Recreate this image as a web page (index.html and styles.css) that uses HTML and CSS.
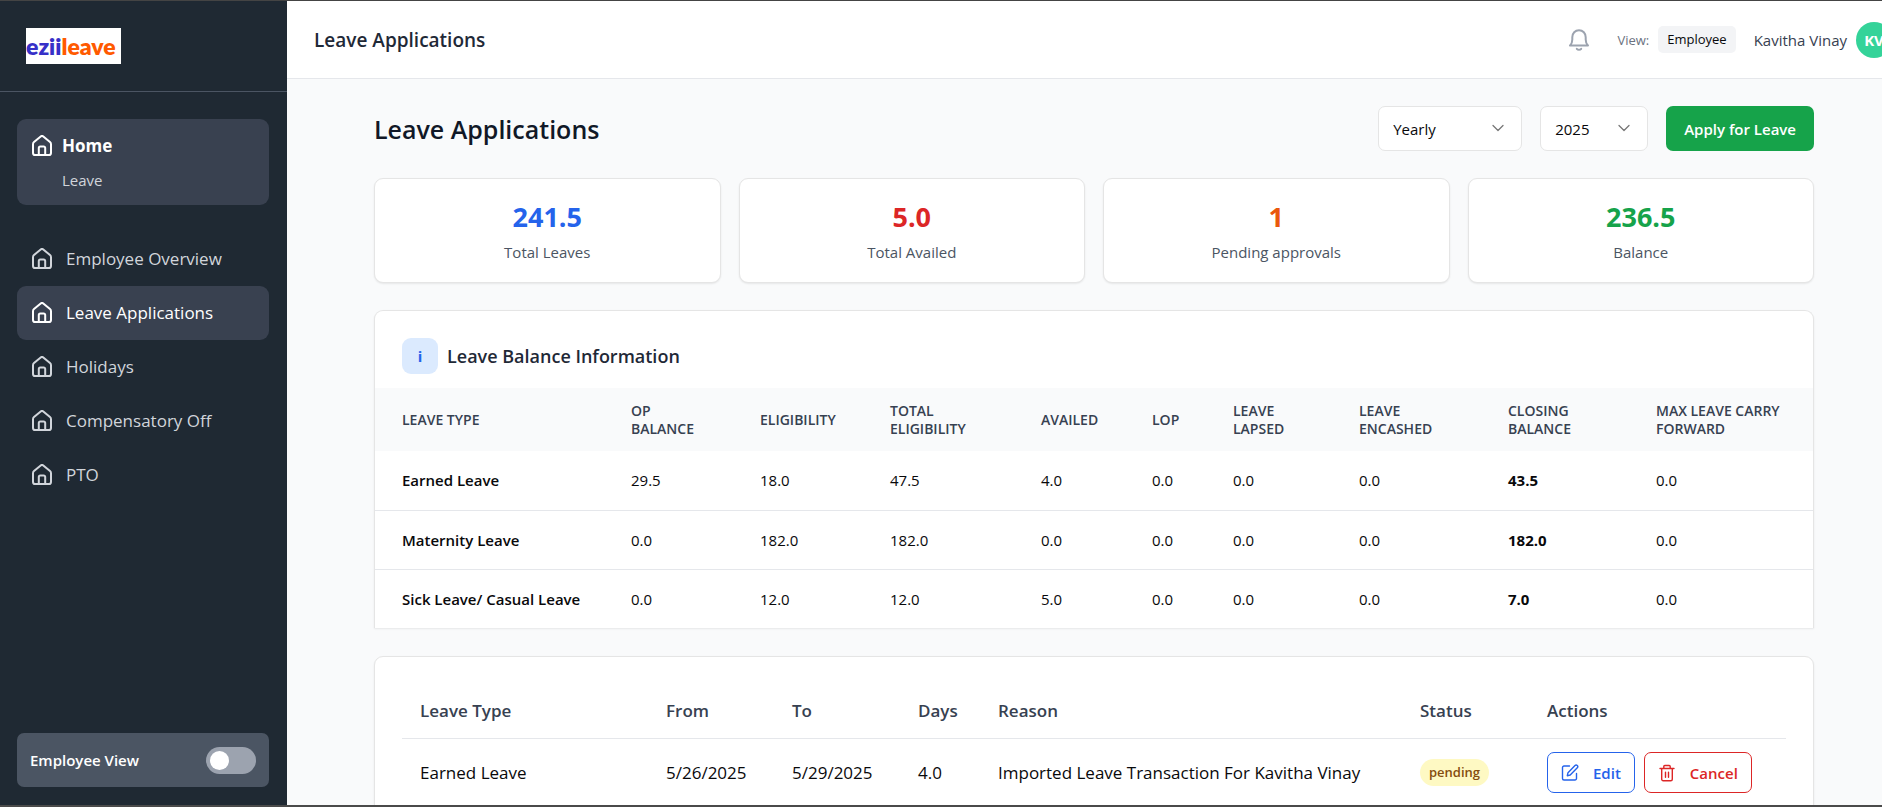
FILE: index.html
```html
<!DOCTYPE html>
<html lang="en">
<head>
<meta charset="utf-8">
<title>Leave Applications</title>
<link rel="stylesheet" href="styles.css">
</head>
<body>
<svg width="0" height="0" class="sprite" aria-hidden="true">
  <symbol id="home" viewBox="0 0 20 21"><path d="M1 9.200c0-.9.300-1.500 1-2.100L8.700 1.500a2 2 0 0 1 2.600 0L18 7.100c.7.600 1 1.200 1 2.100v8.700a2.100 2.100 0 0 1-2.100 2.100H3.100A2.100 2.100 0 0 1 1 17.900Z"/><path d="M6.800 19.800V13a1.500 1.500 0 0 1 1.500-1.500h3.400a1.500 1.500 0 0 1 1.500 1.500v6.800"/></symbol>
  <symbol id="chevron" viewBox="0 0 12 8"><path d="m1 1.500 5 5 5-5"/></symbol>
</svg>
<div class="app">
  <aside class="sidebar">
    <div class="brand"><a href="#" class="logo"><span class="logo-a">ezii</span><span class="logo-b">leave</span></a></div>
    <nav class="nav">
      <a href="#" class="home-card">
        <svg class="icon"><use href="#home"/></svg>
        <span class="home-title">Home</span>
        <span class="home-sub">Leave</span>
      </a>
      <ul class="menu">
        <li><a href="#" class="menu-link"><svg class="icon"><use href="#home"/></svg>Employee Overview</a></li>
        <li><a href="#" class="menu-link active"><svg class="icon"><use href="#home"/></svg>Leave Applications</a></li>
        <li><a href="#" class="menu-link"><svg class="icon"><use href="#home"/></svg>Holidays</a></li>
        <li><a href="#" class="menu-link"><svg class="icon"><use href="#home"/></svg>Compensatory Off</a></li>
        <li><a href="#" class="menu-link"><svg class="icon"><use href="#home"/></svg>PTO</a></li>
      </ul>
      <label class="view-switch">Employee View<input type="checkbox" class="toggle"></label>
    </nav>
  </aside>
  <div class="page">
    <header class="topbar">
      <div class="topbar-title">Leave Applications</div>
      <div class="topbar-tools">
        <button class="bell" aria-label="Notifications"><svg viewBox="0 0 20 22"><path d="M1 16.500h18c-1.800-1.600-2.300-3.500-2.300-6V8.200C16.700 4.200 13.900 1.200 10 1.200S3.300 4.200 3.300 8.200v2.300c0 2.500-.5 4.400-2.300 6Z"/><path d="M7.800 19.800c1 1.200 3.400 1.200 4.400 0"/></svg></button>
        <span class="view-label">View:</span>
        <span class="view-chip">Employee</span>
        <span class="user-name">Kavitha Vinay</span>
        <span class="avatar">KV</span>
      </div>
    </header>
    <main class="main">
      <div class="container">
        <div class="heading">
          <h1>Leave Applications</h1>
          <div class="filters">
            <div class="select select-period"><select aria-label="Period"><option>Yearly</option></select><svg><use href="#chevron"/></svg></div>
            <div class="select select-year"><select aria-label="Year"><option>2025</option></select><svg><use href="#chevron"/></svg></div>
            <button class="apply">Apply for Leave</button>
          </div>
        </div>
        <section class="stats">
          <div class="card stat"><div class="stat-value blue">241.5</div><div class="stat-label">Total Leaves</div></div>
          <div class="card stat"><div class="stat-value red">5.0</div><div class="stat-label">Total Availed</div></div>
          <div class="card stat"><div class="stat-value orange">1</div><div class="stat-label">Pending approvals</div></div>
          <div class="card stat"><div class="stat-value green">236.5</div><div class="stat-label">Balance</div></div>
        </section>
        <section class="card balance">
          <div class="balance-head"><span class="info">i</span><h2>Leave Balance Information</h2></div>
          <table class="balance-table">
            <thead><tr>
              <th class="b-type">Leave Type</th><th class="b-op">OP<br>Balance</th><th class="b-elig">Eligibility</th><th class="b-total">Total<br>Eligibility</th><th class="b-availed">Availed</th><th class="b-lop">LOP</th><th class="b-lapsed">Leave<br>Lapsed</th><th class="b-encashed">Leave<br>Encashed</th><th class="b-closing">Closing<br>Balance</th><th class="b-carry">Max Leave Carry<br>Forward</th>
            </tr></thead>
            <tbody>
              <tr><th scope="row">Earned Leave</th><td>29.5</td><td>18.0</td><td>47.5</td><td>4.0</td><td>0.0</td><td>0.0</td><td>0.0</td><td class="closing">43.5</td><td>0.0</td></tr>
              <tr><th scope="row">Maternity Leave</th><td>0.0</td><td>182.0</td><td>182.0</td><td>0.0</td><td>0.0</td><td>0.0</td><td>0.0</td><td class="closing">182.0</td><td>0.0</td></tr>
              <tr><th scope="row">Sick Leave/ Casual Leave</th><td>0.0</td><td>12.0</td><td>12.0</td><td>5.0</td><td>0.0</td><td>0.0</td><td>0.0</td><td class="closing">7.0</td><td>0.0</td></tr>
            </tbody>
          </table>
        </section>
        <section class="card requests">
          <table class="request-table">
            <thead><tr><th class="r-type">Leave Type</th><th class="r-date">From</th><th class="r-date">To</th><th class="r-days">Days</th><th class="r-reason">Reason</th><th class="r-status">Status</th><th class="r-actions">Actions</th></tr></thead>
            <tbody><tr>
              <td>Earned Leave</td><td>5/26/2025</td><td>5/29/2025</td><td>4.0</td><td>Imported Leave Transaction For Kavitha Vinay</td>
              <td><span class="pill">pending</span></td>
              <td><div class="actions">
                <button class="action edit"><svg viewBox="0 0 18 18"><path d="M8.500 2H3a1.500 1.500 0 0 0-1.500 1.500v11A1.500 1.500 0 0 0 3 16h11a1.500 1.500 0 0 0 1.500-1.500V9.500"/><path d="M6.300 11.700 7 8.700 14 1.600a1.500 1.500 0 0 1 2.300 2.200L9.200 11Z"/></svg>Edit</button>
                <button class="action cancel"><svg viewBox="0 0 18 18"><path d="M2 4.500h14M5.800 4.300V2.500a1 1 0 0 1 1-1h4.400a1 1 0 0 1 1 1v1.800M3.700 4.500V15.300a1.500 1.500 0 0 0 1.500 1.500h7.600a1.500 1.500 0 0 0 1.500-1.500V4.500M7.500 8.300v5M10.500 8.300v5"/></svg>Cancel</button>
              </div></td>
            </tr></tbody>
          </table>
        </section>
      </div>
    </main>
  </div>
</div>
</body>
</html>
```
FILE: styles.css
```css
* { box-sizing: border-box; }
body { margin: 0; overflow: hidden; font-family: "Open Sans", "Noto Sans", sans-serif; font-size: 17px; color: #09090b; }
a { color: inherit; text-decoration: none; }
button, select { font: inherit; cursor: pointer; }
h1, h2, ul { margin: 0; padding: 0; font-weight: 600; }
svg { fill: none; stroke: currentColor; stroke-width: 2; stroke-linecap: round; stroke-linejoin: round; flex: none; }
.sprite { position: absolute; }

.app { display: flex; width: calc(100% + 19px); height: 100vh; border-top: 1px solid #444; border-bottom: 2px solid #4a4a4a; overflow: hidden; }

.sidebar { display: flex; flex-direction: column; flex: none; width: 287px; background: #1f2933; color: #d1d5db; }
.brand { padding: 27px 26px; border-bottom: 1px solid #4b5563; }
.logo { display: flex; align-items: center; width: 95px; height: 36px; background: #fff; font: 800 23px/36px Lato, sans-serif; overflow: hidden; }
.logo-a { color: #3730c8; }
.logo-b { color: #ff5a00; }
.nav { display: flex; flex-direction: column; flex: 1; padding: 27px 18px 18px 17px; }
.home-card { display: grid; grid-template-columns: 20px 1fr; column-gap: 10px; align-items: center; padding: 13px 15px; border-radius: 9px; background: #394150; margin-bottom: 27px; }
.icon { width: 20px; height: 21px; }
.home-card .icon, .home-title { color: #fff; }
.home-title { font-weight: 700; line-height: 27px; }
.home-sub { grid-column: 2; font-size: 15px; line-height: 24px; margin-top: 9px; }
.menu { list-style: none; font-weight: 400; }
.menu-link { display: flex; align-items: center; gap: 14px; height: 54px; padding: 0 15px 2px; border-radius: 9px; }
.active { background: #394150; color: #fff; }
.view-switch { display: flex; align-items: center; justify-content: space-between; height: 54px; margin-top: auto; padding: 0 13px; border-radius: 7px; background: #4b5563; color: #fff; font-size: 15px; font-weight: 600; }
.toggle { appearance: none; width: 50px; height: 27px; margin: 0; padding: 4px; border-radius: 14px; background: #9ca3af; }
.toggle::before { content: ""; display: block; width: 19px; height: 19px; border-radius: 50%; background: #fff; }
.toggle:checked::before { margin-left: auto; }

.page { display: flex; flex-direction: column; flex: 1; min-width: 0; background: #f9fafb; }
.topbar { display: flex; align-items: center; justify-content: space-between; flex: none; height: 78px; padding: 0 9px 0 27px; border-bottom: 1px solid #e5e7eb; background: #fff; }
.topbar-title { font-size: 19px; font-weight: 600; color: #1f2937; }
.topbar-tools { display: flex; align-items: center; font-size: 15px; }
.bell { display: flex; padding: 0; margin-right: 28px; border: 0; background: none; color: #9ca3af; }
.bell svg { width: 20px; height: 22px; }
.view-label { font-size: 13px; color: #6b7280; margin-right: 9px; }
.view-chip { padding: 0 9px; border-radius: 5px; background: #f3f4f6; font-size: 13px; line-height: 27px; margin-right: 18px; }
.user-name { color: #374151; margin-right: 9px; }
.avatar { width: 36px; height: 36px; border-radius: 50%; background: #34d399; color: #fff; font-weight: 700; line-height: 36px; text-align: center; }

.main { flex: 1; min-height: 0; padding: 27px; overflow: hidden; }
.container { max-width: 1440px; margin: 0 auto; }
.heading { display: flex; align-items: center; justify-content: space-between; height: 45px; }
h1 { font-size: 25px; color: #111827; }
.filters { display: flex; gap: 18px; font-size: 15px; }
.select { position: relative; height: 45px; }
.select-period { width: 144px; }
.select-year { width: 108px; }
.select select { appearance: none; width: 100%; height: 100%; padding: 0 14px; border: 1px solid #e5e5e5; border-radius: 7px; background: #fff; color: inherit; }
.select svg { position: absolute; right: 18px; top: 18px; width: 12px; height: 8px; stroke-width: 1.3; color: #777; pointer-events: none; }
.apply { padding: 0 18px; border: 0; border-radius: 7px; background: #16a34a; color: #fff; font-weight: 600; }

.card { background: #fff; border: 1px solid #e5e5e5; border-radius: 9px; box-shadow: 0 1px 2px rgba(0, 0, 0, .08); }
.stats { display: grid; grid-template-columns: repeat(4, 1fr); gap: 18px; margin: 27px 0; }
.stat { padding: 18px; text-align: center; }
.stat-value { font-size: 27px; font-weight: 700; line-height: 39px; }
.stat-label { font-size: 15px; line-height: 23px; margin-top: 5px; color: #4b5563; }
.blue { color: #2563eb; }
.red { color: #dc2626; }
.orange { color: #ea580c; }
.green { color: #16a34a; }

.balance { border-bottom: 0; border-radius: 9px 9px 0 0; margin-bottom: 28px; }
.balance-head { display: flex; align-items: center; gap: 9px; padding: 27px 27px 14px; }
.info { width: 36px; height: 36px; border-radius: 9px; background: #dbeafe; color: #2563eb; font-size: 15px; font-weight: 700; line-height: 36px; text-align: center; }
h2 { font-size: 18px; line-height: 36px; color: #1f2937; }
table { width: 100%; border-collapse: collapse; table-layout: fixed; text-align: left; }
.balance-table th, .balance-table td { padding: 0 0 0 27px; font-size: 15px; white-space: nowrap; }
.balance-table thead th { height: 63px; background: #f9fafb; color: #374151; font-size: 14px; font-weight: 600; line-height: 18px; text-transform: uppercase; }
.balance-table tbody tr { height: 59px; }
.balance-table tbody tr + tr { border-top: 1px solid #e5e7eb; }
.balance-table tbody th { font-weight: 600; }
.balance-table .closing { font-weight: 700; }
.b-type { width: 229px; }
.b-op { width: 129px; }
.b-elig { width: 130px; }
.b-total { width: 151px; }
.b-availed { width: 111px; }
.b-lop { width: 81px; }
.b-lapsed { width: 126px; }
.b-encashed { width: 149px; }
.b-closing { width: 148px; }
.b-carry { width: 184px; }

.requests { padding: 27px; }
.request-table th, .request-table td { padding: 0 0 0 18px; white-space: nowrap; }
.request-table th { height: 54px; font-weight: 600; color: #374151; border-bottom: 1px solid #e5e7eb; }
.request-table td { height: 69px; }
.r-type { width: 246px; }
.r-date { width: 126px; }
.r-days { width: 80px; }
.r-reason { width: 422px; }
.r-status { width: 127px; }
.r-actions { width: 257px; }
.pill { display: inline-block; padding: 0 9px; border-radius: 14px; background: #fef9c3; color: #854d0e; font-size: 13px; font-weight: 600; line-height: 27px; }
.actions { display: flex; gap: 9px; }
.action { display: flex; align-items: center; gap: 14px; height: 41px; padding: 0 13px; border: 1px solid; border-radius: 7px; background: #fff; font-size: 15px; font-weight: 600; }
.action svg { width: 18px; height: 18px; stroke-width: 1.4; }
.edit { color: #2563eb; }
.cancel { color: #dc2626; }
```
